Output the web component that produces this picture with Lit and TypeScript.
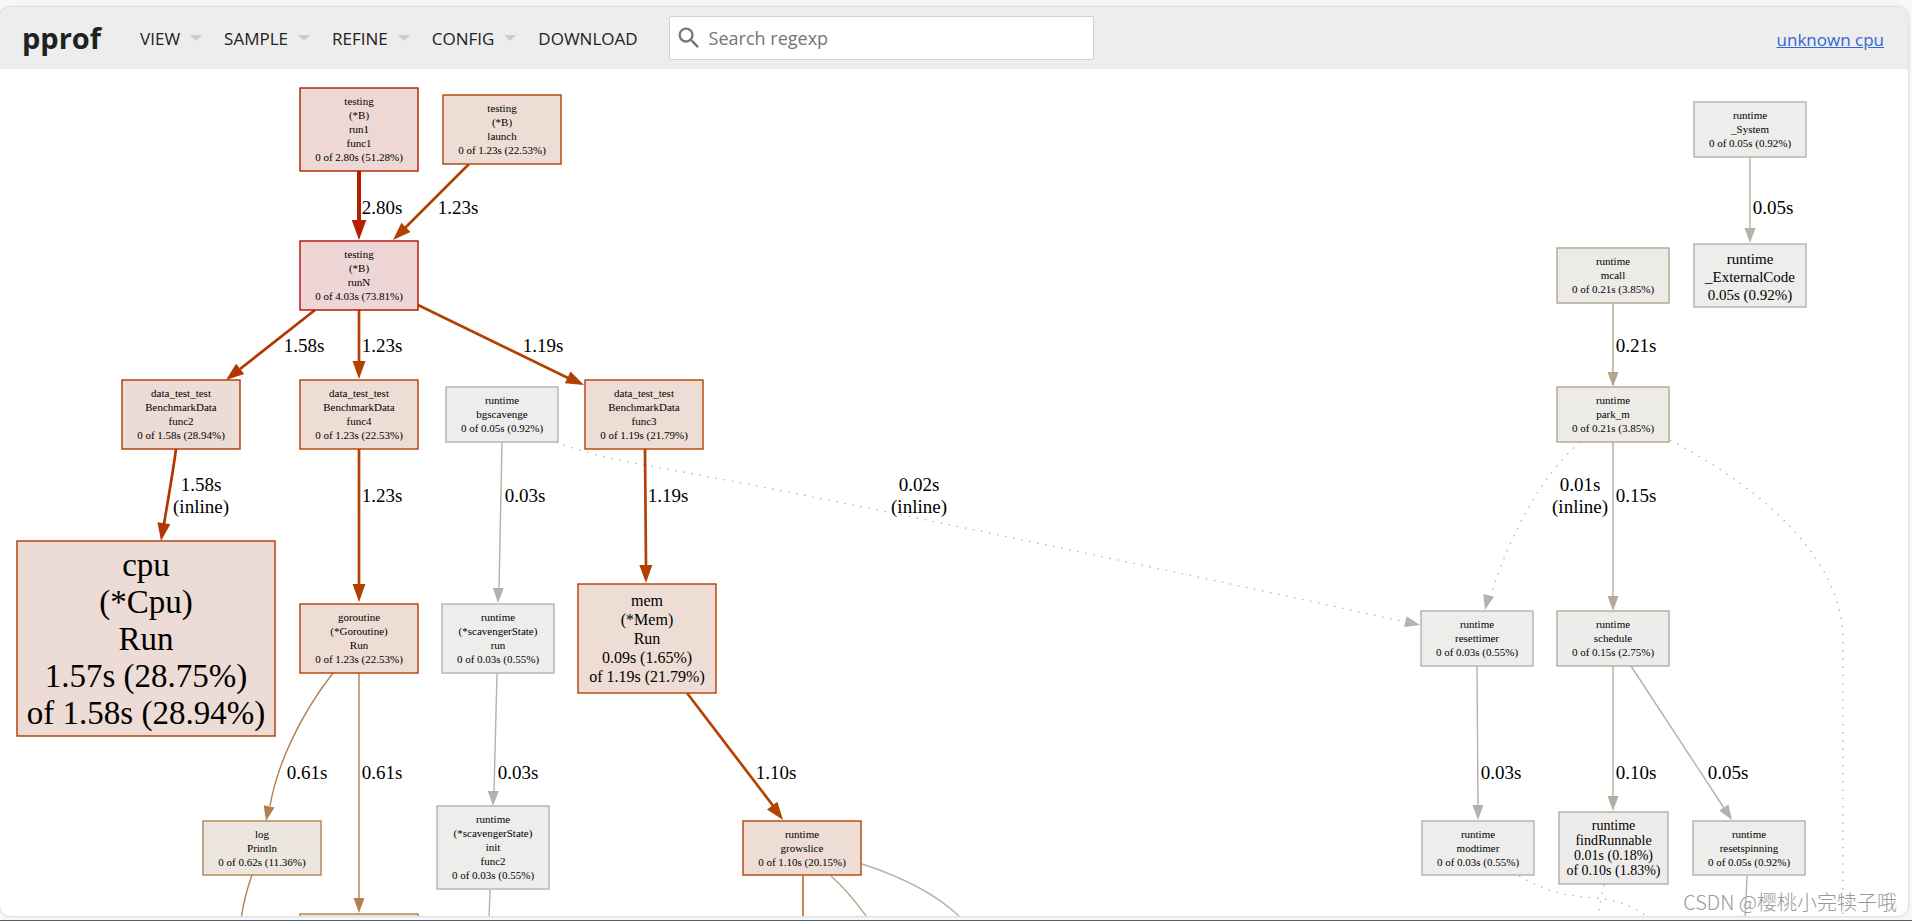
import { LitElement, html, svg, css } from "lit";
import { customElement, property } from "lit/decorators.js";

type Size = "s" | "m" | "l" | "xl" | "xxl";

interface GraphNode {
  box: [number, number, number, number]; // left, top, right, bottom
  lines: string[];
  stroke: string;
  fill: string;
  size?: Size;
}

interface GraphEdge {
  path: string;
  color: string;
  width?: number;
  dotted?: boolean;
  // tip x, tip y, then the direction the arrow flies in
  tip?: [number, number, number, number];
}

interface EdgeLabel {
  x: number;
  y: number;
  lines: string[];
}

const LINE: Record<Size, { first: number; step: number }> = {
  s: { first: 17, step: 14 },
  m: { first: 18, step: 15 },
  l: { first: 20, step: 18 },
  xl: { first: 22, step: 19 },
  xxl: { first: 35, step: 37 },
};

const RED = { stroke: "#b22000", fill: "#edd8d5" };
const HOT = { stroke: "#b20e00", fill: "#edd6d5" };
const RUST = { stroke: "#b23600", fill: "#eddbd5" };
const ORANGE = { stroke: "#b24000", fill: "#edddd5" };
const TAN = { stroke: "#b2804e", fill: "#ede6df" };
const SAND = { stroke: "#b2a68f", fill: "#edebe8" };
const STONE = { stroke: "#b2ada0", fill: "#edecea" };
const GREY = { stroke: "#b2b2ab", fill: "#ededeb" };
const SILVER = { stroke: "#b2b2af", fill: "#ededec" };

const NODES: GraphNode[] = [
  { box: [300, 88, 418, 171], lines: ["testing", "(*B)", "run1", "func1", "0 of 2.80s (51.28%)"], ...RED },
  { box: [443, 95, 561, 164], lines: ["testing", "(*B)", "launch", "0 of 1.23s (22.53%)"], ...ORANGE },
  { box: [300, 241, 418, 310], lines: ["testing", "(*B)", "runN", "0 of 4.03s (73.81%)"], ...HOT },
  { box: [122, 380, 240, 449], lines: ["data_test_test", "BenchmarkData", "func2", "0 of 1.58s (28.94%)"], ...RUST },
  { box: [300, 380, 418, 449], lines: ["data_test_test", "BenchmarkData", "func4", "0 of 1.23s (22.53%)"], ...ORANGE },
  { box: [446, 387, 558, 442], lines: ["runtime", "bgscavenge", "0 of 0.05s (0.92%)"], ...SILVER },
  { box: [585, 380, 703, 449], lines: ["data_test_test", "BenchmarkData", "func3", "0 of 1.19s (21.79%)"], ...ORANGE },
  { box: [17, 541, 275, 736], lines: ["cpu", "(*Cpu)", "Run", "1.57s (28.75%)", "of 1.58s (28.94%)"], size: "xxl", ...RUST },
  { box: [300, 604, 418, 673], lines: ["goroutine", "(*Goroutine)", "Run", "0 of 1.23s (22.53%)"], ...ORANGE },
  { box: [442, 604, 554, 673], lines: ["runtime", "(*scavengerState)", "run", "0 of 0.03s (0.55%)"], ...SILVER },
  { box: [578, 584, 716, 693], lines: ["mem", "(*Mem)", "Run", "0.09s (1.65%)", "of 1.19s (21.79%)"], size: "xl", ...ORANGE },
  { box: [203, 821, 321, 875], lines: ["log", "Println", "0 of 0.62s (11.36%)"], ...TAN },
  { box: [300, 914, 418, 969], lines: [], ...TAN },
  { box: [437, 806, 549, 889], lines: ["runtime", "(*scavengerState)", "init", "func2", "0 of 0.03s (0.55%)"], ...SILVER },
  { box: [743, 821, 861, 875], lines: ["runtime", "growslice", "0 of 1.10s (20.15%)"], stroke: "#b24400", fill: "#edddd5" },
  { box: [1694, 102, 1806, 157], lines: ["runtime", "_System", "0 of 0.05s (0.92%)"], ...GREY },
  { box: [1694, 244, 1806, 307], lines: ["runtime", "_ExternalCode", "0.05s (0.92%)"], size: "l", ...GREY },
  { box: [1557, 248, 1669, 303], lines: ["runtime", "mcall", "0 of 0.21s (3.85%)"], ...SAND },
  { box: [1557, 387, 1669, 442], lines: ["runtime", "park_m", "0 of 0.21s (3.85%)"], ...SAND },
  { box: [1421, 611, 1533, 666], lines: ["runtime", "resettimer", "0 of 0.03s (0.55%)"], ...SILVER },
  { box: [1557, 611, 1669, 666], lines: ["runtime", "schedule", "0 of 0.15s (2.75%)"], ...STONE },
  { box: [1422, 821, 1534, 875], lines: ["runtime", "modtimer", "0 of 0.03s (0.55%)"], ...SILVER },
  { box: [1559, 812, 1668, 884], lines: ["runtime", "findRunnable", "0.01s (0.18%)", "of 0.10s (1.83%)"], size: "m", ...STONE },
  { box: [1693, 821, 1805, 875], lines: ["runtime", "resetspinning", "0 of 0.05s (0.92%)"], ...GREY },
];

const EDGES: GraphEdge[] = [
  { path: "M359 171V222", color: "#b22000", width: 4, tip: [359, 240, 0, 1] },
  { path: "M469 164L405 228", color: "#b24000", width: 2.7, tip: [393, 240, -78, 76] },
  { path: "M315 310L240 369", color: "#b23600", width: 2.7, tip: [226, 380, -89, 70] },
  { path: "M359 310V363", color: "#b24000", width: 2.7, tip: [359, 379, 0, 1] },
  { path: "M418 305L568 378", color: "#b24000", width: 2.7, tip: [584, 385, 165, 78] },
  { path: "M176 449C173 472 168 500 164 524", color: "#b23600", width: 2.7, tip: [161, 541, -15, 92] },
  { path: "M359 449V586", color: "#b24000", width: 2.7, tip: [359, 602, 0, 1] },
  { path: "M502 442L499 589", color: "#b2b2af", tip: [498, 603, -1, 50] },
  { path: "M556 442C585 453 615 460 644 465C800 492 1150 566 1406 622", color: "#b2b2af", dotted: true, tip: [1420, 625, 43, 10] },
  { path: "M645 449L646 566", color: "#b24000", width: 2.7, tip: [646, 583, 1, 100] },
  { path: "M333 673C300 715 277 765 270 806", color: "#b2804e", tip: [266, 821, -8, 38] },
  { path: "M359 673V899", color: "#b2804e", tip: [359, 913, 0, 1] },
  { path: "M252 875Q244 897 241 920", color: "#b2804e" },
  { path: "M497 673L494 792", color: "#b2b2af", tip: [493, 806, -1, 50] },
  { path: "M687 693L774 807", color: "#b24400", width: 2.7, tip: [783, 820, 96, 128] },
  { path: "M490 890L489 920", color: "#b2b2af" },
  { path: "M803 876V920", color: "#b25310" },
  { path: "M831 876Q850 893 869 920", color: "#b2a68f" },
  { path: "M862 864Q930 886 963 920", color: "#b2b2af" },
  { path: "M1750 157V229", color: "#b2b2ab", tip: [1750, 243, 0, 1] },
  { path: "M1613 303V373", color: "#b2a68f", tip: [1613, 387, 0, 1] },
  { path: "M1580 442C1540 477 1510 535 1492 592", color: "#b2b2b0", dotted: true, tip: [1485, 610, -5, 20] },
  { path: "M1613 442V597", color: "#b2ab99", tip: [1613, 611, 0, 1] },
  { path: "M1670 440C1765 490 1843 560 1843 640V920", color: "#b2b2b0", dotted: true },
  { path: "M1477 666L1478 806", color: "#b2b2af", tip: [1478, 820, 0, 1] },
  { path: "M1613 666V797", color: "#b2ada0", tip: [1613, 811, 0, 1] },
  { path: "M1631 666L1724 808", color: "#b2b2ab", tip: [1732, 820, 100, 154] },
  { path: "M1747 876L1745 920", color: "#b2b2ab" },
  { path: "M1519 876C1550 893 1565 896 1597 898C1620 901 1632 906 1648 917", color: "#b2b2b0", dotted: true },
  { path: "M1604 885Q1600 900 1598 920", color: "#b2b2b0", dotted: true },
];

const LABELS: EdgeLabel[] = [
  { x: 382, y: 214, lines: ["2.80s"] },
  { x: 458, y: 214, lines: ["1.23s"] },
  { x: 1773, y: 214, lines: ["0.05s"] },
  { x: 304, y: 352, lines: ["1.58s"] },
  { x: 382, y: 352, lines: ["1.23s"] },
  { x: 543, y: 352, lines: ["1.19s"] },
  { x: 1636, y: 352, lines: ["0.21s"] },
  { x: 201, y: 491, lines: ["1.58s", "(inline)"] },
  { x: 919, y: 491, lines: ["0.02s", "(inline)"] },
  { x: 1580, y: 491, lines: ["0.01s", "(inline)"] },
  { x: 382, y: 502, lines: ["1.23s"] },
  { x: 525, y: 502, lines: ["0.03s"] },
  { x: 668, y: 502, lines: ["1.19s"] },
  { x: 1636, y: 502, lines: ["0.15s"] },
  { x: 307, y: 779, lines: ["0.61s"] },
  { x: 382, y: 779, lines: ["0.61s"] },
  { x: 518, y: 779, lines: ["0.03s"] },
  { x: 776, y: 779, lines: ["1.10s"] },
  { x: 1501, y: 779, lines: ["0.03s"] },
  { x: 1636, y: 779, lines: ["0.10s"] },
  { x: 1728, y: 779, lines: ["0.05s"] },
];

@customElement("pprof-header")
export class PprofHeader extends LitElement {
  static styles = css`
    :host {
      display: flex;
      align-items: center;
      flex: none;
      height: 62px;
      padding: 0 24px 0 22px;
      box-sizing: border-box;
      background: #ededed;
      color: #212121;
      font-family: "Open Sans", "Noto Sans", sans-serif;
      font-size: 17px;
    }
    .title {
      margin: 0 39px 0 0;
      font-size: 29px;
      line-height: 40px;
      font-weight: 700;
    }
    .menu {
      display: flex;
      gap: 22px;
      padding-top: 2px;
    }
    .item {
      display: flex;
      align-items: center;
      gap: 10px;
      padding: 0;
      border: 0;
      background: none;
      color: inherit;
      font: inherit;
      line-height: 24px;
      cursor: pointer;
    }
    .arrow {
      margin-bottom: 2px;
      border: 6px solid transparent;
      border-top-color: #ccc;
      border-bottom: 0;
    }
    .search {
      display: flex;
      align-items: center;
      gap: 6px;
      flex: 0 1 425px;
      box-sizing: border-box;
      height: 44px;
      margin-left: 31px;
      padding: 0 5px;
      border: 1px solid #d0d0d0;
      border-radius: 2px;
      background: #fff;
    }
    .glass {
      flex: none;
      width: 28px;
      height: 28px;
      fill: #757575;
    }
    .input {
      flex: 1;
      min-width: 0;
      padding: 0;
      border: 0;
      outline: 0;
      background: none;
      color: inherit;
      font: inherit;
      font-size: 18px;
    }
    .input::placeholder {
      color: #757575;
      opacity: 1;
    }
    .profile {
      margin-left: auto;
      padding-top: 2px;
      color: #3367d6;
      white-space: nowrap;
    }
  `;

  render() {
    return html`
      <h1 class="title">pprof</h1>
      <nav class="menu">
        ${["View", "Sample", "Refine", "Config"].map(
          (name) => html`<button class="item" type="button">
            ${name.toUpperCase()}<span class="arrow"></span>
          </button>`
        )}
        <button class="item" type="button">DOWNLOAD</button>
      </nav>
      <label class="search" for="search">
        <svg class="glass" viewBox="0 0 24 24" aria-hidden="true">
          <path
            d="M15.5 14h-.79l-.28-.27A6.471 6.471 0 0 0 16 9.5 6.5 6.5 0 1 0 9.5 16c1.61 0 3.09-.59 4.23-1.57l.27.28v.79l5 4.99L20.49 19l-4.99-5zm-6 0C7.01 14 5 11.99 5 9.5S7.01 5 9.5 5 14 7.01 14 9.5 11.99 14 9.5 14z"
          ></path>
        </svg>
        <input class="input" id="search" type="text" placeholder="Search regexp" aria-label="Search regexp" />
      </label>
      <a class="profile" href="#details">unknown cpu</a>
    `;
  }
}

@customElement("call-graph")
export class CallGraph extends LitElement {
  static styles = css`
    :host {
      display: block;
      flex: 1;
      min-height: 0;
      overflow: hidden;
    }
    .canvas {
      display: block;
      width: 100%;
      height: 100%;
      font-family: "Liberation Serif", "Times New Roman", serif;
      text-anchor: middle;
    }
    .s { font-size: 11px; }
    .m { font-size: 14px; }
    .l { font-size: 15px; }
    .xl { font-size: 16px; }
    .xxl { font-size: 33px; }
    .label { font-size: 19px; }
    .line { fill: none; }
    .dotted { stroke-dasharray: 1.4 6.8; }
  `;

  @property({ attribute: false }) nodes: GraphNode[] = [];
  @property({ attribute: false }) edges: GraphEdge[] = [];
  @property({ attribute: false }) labels: EdgeLabel[] = [];

  private arrow(edge: GraphEdge) {
    if (!edge.tip) return null;
    const [x, y, dx, dy] = edge.tip;
    const n = Math.hypot(dx, dy);
    const w = edge.width ?? 1.4;
    const len = w > 3 ? 20 : w > 2 ? 18 : 15;
    const half = w > 3 ? 7.3 : w > 2 ? 6.5 : 5.5;
    const ux = dx / n;
    const uy = dy / n;
    const bx = x - ux * len;
    const by = y - uy * len;
    const at = (px: number, py: number) => `${px.toFixed(1)},${py.toFixed(1)}`;
    const points = [at(x, y), at(bx - uy * half, by + ux * half), at(bx + uy * half, by - ux * half)];
    return svg`<polygon points=${points.join(" ")} fill=${edge.color}></polygon>`;
  }

  private edge(edge: GraphEdge) {
    return svg`<g>
      <path class=${edge.dotted ? "line dotted" : "line"} d=${edge.path}
        stroke=${edge.color} stroke-width=${edge.width ?? 1.4}></path>
      ${this.arrow(edge)}
    </g>`;
  }

  private node(node: GraphNode) {
    const [left, top, right, bottom] = node.box;
    const size = node.size ?? "s";
    const { first, step } = LINE[size];
    return svg`<g class=${size}>
      <rect x=${left} y=${top} width=${right - left} height=${bottom - top}
        fill=${node.fill} stroke=${node.stroke} stroke-width="1.4"></rect>
      ${node.lines.map(
        (line, i) => svg`<text x=${(left + right) / 2} y=${top + first + i * step}>${line}</text>`
      )}
    </g>`;
  }

  render() {
    return html`<svg class="canvas" role="img" aria-label="Call graph">
      <g transform="translate(0 -69)">
        ${this.edges.map((e) => this.edge(e))}
        ${this.nodes.map((n) => this.node(n))}
        ${this.labels.map((l) =>
          l.lines.map((line, i) => svg`<text class="label" x=${l.x} y=${l.y + i * 22}>${line}</text>`)
        )}
      </g>
    </svg>`;
  }
}

@customElement("app-root")
export class AppRoot extends LitElement {
  static styles = css`
    :host {
      display: flex;
      height: 100vh;
      box-sizing: border-box;
      padding: 7px 4px 4px 0;
      border-bottom: 1px solid #4a5f7c;
      background: #f7f7f7;
    }
    .page {
      position: relative;
      display: flex;
      flex-direction: column;
      flex: 1;
      min-width: 0;
      overflow: hidden;
      border-radius: 10px;
      background: #fff;
      box-shadow: 0 0 3px rgba(0, 0, 0, 0.25);
    }
    .mark {
      position: absolute;
      right: 11px;
      bottom: 0;
      color: #999;
      font-family: "Noto Sans CJK SC", sans-serif;
      font-size: 20px;
      font-weight: 300;
      line-height: 28px;
      text-shadow: 0 0 1px #fff;
    }
  `;

  render() {
    return html`<main class="page">
      <pprof-header></pprof-header>
      <call-graph .nodes=${NODES} .edges=${EDGES} .labels=${LABELS}></call-graph>
      <div class="mark">CSDN @樱桃小完犊子哦</div>
    </main>`;
  }
}
